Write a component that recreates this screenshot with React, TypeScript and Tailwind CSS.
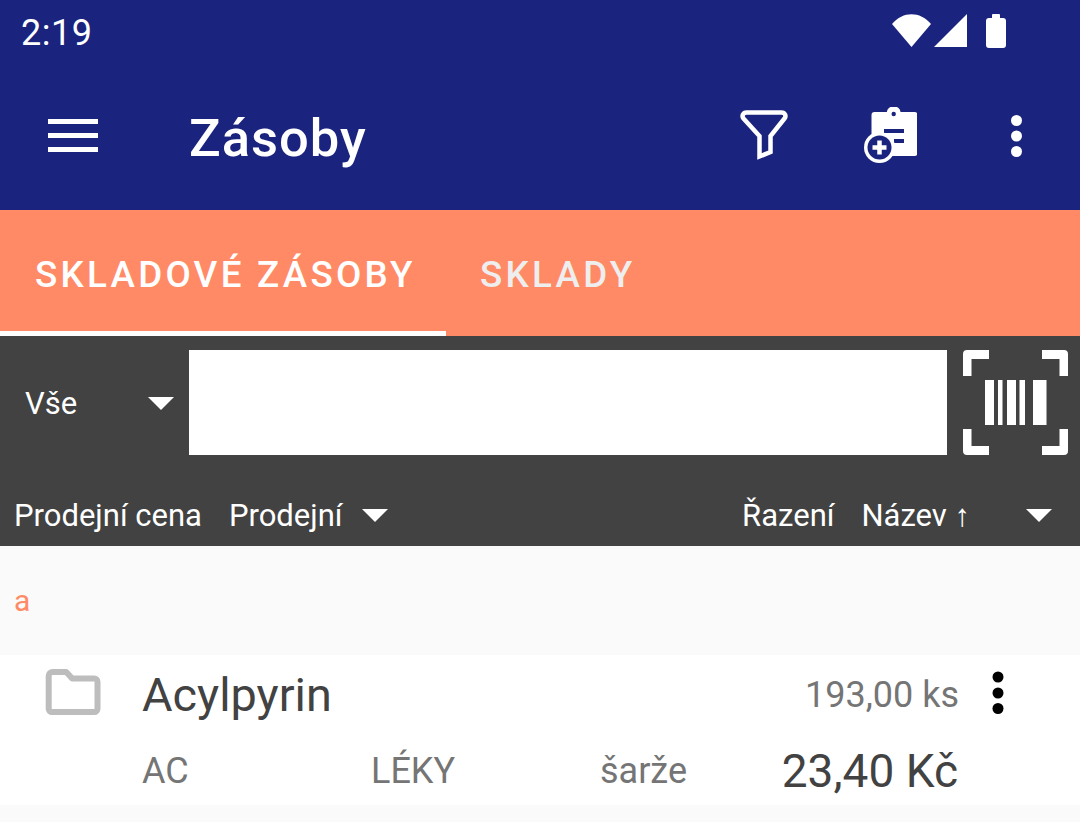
export default function App() {
  const Caret = ({ className = "" }: { className?: string }) => (
    <svg width="28" height="14" viewBox="0 0 28 14" className={className}><path d="M1 1h26L14 14z" fill="#fff" /></svg>
  );
  return (
    <div className="relative w-[1080px] h-[822px] overflow-hidden bg-[#fafafa] font-['Roboto',sans-serif]">
      <div className="h-[210px] bg-[#1a237e] text-white flex flex-col">
        <div className="h-[66px] flex items-center pl-[21px] shrink-0">
          <span className="text-[36px] leading-none tracking-[0.5px]">2:19</span>
          <svg width="114" height="34" viewBox="0 0 114 34" className="ml-auto mr-[74px] mb-[4px]" fill="#fff">
            <path d="M0 10C11 -3 28 -3 39 10L19.500 33z" />
            <path d="M42 33L75 0V33z" />
            <path d="M100 1a1 1 0 0 1 1-1h6a1 1 0 0 1 1 1v3h3a3 3 0 0 1 3 3v24a3 3 0 0 1-3 3H97a3 3 0 0 1-3-3V7a3 3 0 0 1 3-3h3z" />
          </svg>
        </div>
        <div className="flex-1 flex items-center pb-[2px]">
          <svg width="50" height="36" viewBox="0 0 50 36" className="ml-[48px]">
            <rect y="0" width="50" height="5" fill="#fff" />
            <rect y="14" width="50" height="5" fill="#fff" />
            <rect y="28" width="50" height="5" fill="#fff" />
          </svg>
          <span className="ml-[91px] pt-[2px] text-[52.5px] font-medium leading-none tracking-[1px]">Zásoby</span>
          <svg width="52" height="54" viewBox="0 1 52 54" className="ml-auto">
            <path d="M7.500 3.500h35c3.500 0 5 3.500 3 6L31.500 27v16l-11 4.500V27L4.500 9.500C2.500 7 4 3.500 7.500 3.500z" fill="none" stroke="#fff" strokeWidth="4.500" />
          </svg>
          <svg width="53" height="56" viewBox="0 0 53 56" className="ml-[73px] mb-[4px]">
            <path d="M7.500 8a3 3 0 0 1 3-3h12.300a7 7 0 0 1 13.800 0h13.900a3 3 0 0 1 3 3v38a3 3 0 0 1-3 3H7.500z" fill="#fff" />
            <circle cx="29.700" cy="7" r="2.200" fill="#1a237e" />
            <rect x="20" y="22" width="20" height="4" fill="#1a237e" />
            <rect x="30" y="32" width="10" height="4" fill="#1a237e" />
            <circle cx="15.500" cy="40.500" r="15.500" fill="#fff" />
            <circle cx="15.500" cy="40.500" r="12" fill="#1a237e" />
            <path d="M15.500 33.500v14M8.500 40.500h14" stroke="#fff" strokeWidth="4.500" />
          </svg>
          <svg width="14" height="46" viewBox="0 0 14 46" className="ml-[93px] mr-[56px]">
            <circle cx="6.500" cy="6.500" r="5.500" fill="#fff" />
            <circle cx="6.500" cy="22" r="5.500" fill="#fff" />
            <circle cx="6.500" cy="37.500" r="5.500" fill="#fff" />
          </svg>
        </div>
      </div>
      <div className="h-[126px] bg-[#ff8a65] flex">
        <div className="w-[446px] border-b-[5px] border-white flex items-center pl-[35px] pt-[8px] text-white text-[36.75px] font-medium tracking-[3.280px] whitespace-nowrap">SKLADOVÉ ZÁSOBY</div>
        <div className="flex items-center pl-[34px] pt-[4px] text-[#eeeeee] text-[36.75px] font-medium tracking-[3.280px]">SKLADY</div>
      </div>
      <div className="h-[210px] bg-[#424242] text-white flex flex-col">
        <div className="flex items-center pt-[14px] h-[119px] shrink-0">
          <span className="ml-[25px] pt-[2px] text-[31px] leading-none w-[122px]">Vše</span>
          <Caret />
          <div className="ml-[14px] w-[758px] h-[105px] bg-white" />
          <svg width="105" height="105" viewBox="0 0 105 105" className="ml-[16px]" fill="#fff">
            <path d="M0 4a4 4 0 0 1 4-4h22v9H8.500v17H0zM105 4a4 4 0 0 0-4-4H79v9h17.500v17h8.500zM0 101a4 4 0 0 0 4 4h22v-9H8.500V79H0zM105 101a4 4 0 0 1-4 4H79v-9h17.500V79h8.500z" />
            <rect x="22" y="30" width="9" height="45" />
            <rect x="35" y="30" width="4.500" height="45" />
            <rect x="44" y="30" width="9" height="45" />
            <rect x="56.500" y="30" width="5.500" height="45" />
            <rect x="70" y="30" width="13.500" height="45" />
          </svg>
        </div>
        <div className="flex items-center flex-1 text-[31px] leading-none pb-[2px] pt-[30px]">
          <span className="ml-[14px] pt-[2px]">Prodejní cena</span>
          <span className="ml-[27px] pt-[2px]">Prodejní</span>
          <Caret className="ml-[18px]" />
          <span className="ml-auto pt-[2px]">Řazení</span>
          <span className="ml-[27px] pt-[2px]">Název ↑</span>
          <Caret className="ml-[55px] mr-[27px]" />
        </div>
      </div>
      <div className="h-[109px] flex items-center pl-[14px] text-[#ff8a65] text-[30px]">a</div>
      <div className="h-[150px] bg-white flex">
        <svg width="58" height="48" viewBox="0 0 58 48" className="ml-[45px] mt-[14px] shrink-0">
          <path d="M3.700 7a4 4 0 0 1 4-4h13.500l6 6.500h22a3.300 3.300 0 0 1 3.300 3.300V39.700a3.300 3.300 0 0 1-3.300 3.300H7a3.300 3.300 0 0 1-3.300-3.300z" fill="none" stroke="#bdbdbd" strokeWidth="6" strokeLinejoin="round" />
        </svg>
        <div className="flex-1 ml-[39px] mr-[121px] flex flex-col">
          <div className="flex items-center justify-between mt-[12px]">
            <span className="text-[46.8px] leading-[56px] text-[#424242]">Acylpyrin</span>
            <span className="text-[36px] text-[#757575] leading-[56px] -mt-[1px]">193,00 ks</span>
          </div>
          <div className="flex items-start mt-[18px] text-[36px] leading-[42px] text-[#757575]">
            <span className="w-[229px] mt-[9px]">AC</span>
            <span className="w-[229px] mt-[9px]">LÉKY</span>
            <span className="mt-[9px]">šarže</span>
            <span className="ml-auto mr-[1px] mt-[2px] text-[46px] leading-[56px] text-[#424242]">23,40 Kč</span>
          </div>
        </div>
        <svg width="14" height="46" viewBox="0 0 14 46" className="absolute left-[991px] top-[670px]">
          <circle cx="7" cy="7" r="5.500" />
          <circle cx="7" cy="23" r="5.500" />
          <circle cx="7" cy="38.500" r="5.500" />
        </svg>
      </div>
    </div>
  );
}
